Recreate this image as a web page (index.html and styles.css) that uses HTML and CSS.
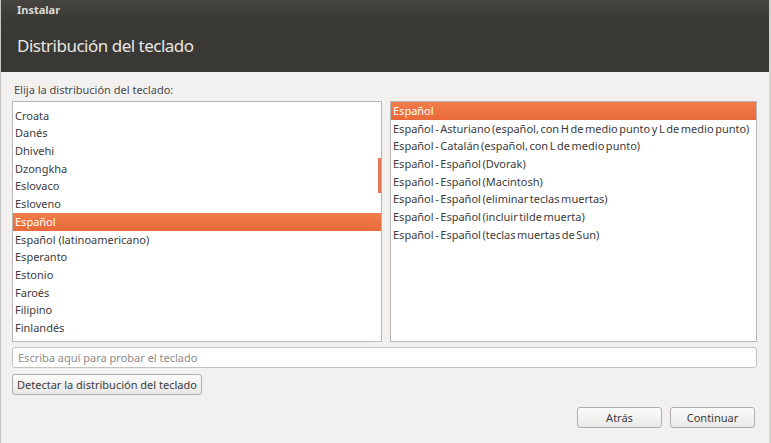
FILE: index.html
```html
<!DOCTYPE html>
<html lang="es">
<head>
    <meta charset="UTF-8">
    <title>Instalar</title>
    <link rel="stylesheet" href="styles.css">
</head>
<body>
    <div class="window">
        <div class="header">
            <div class="app-name">Instalar</div>
            <h1 class="page-title">Distribución del teclado</h1>
        </div>
        <div class="content">
            <div class="label">Elija la distribución del teclado:</div>
            <div class="lists">
                <div class="list list-left">
                    <div class="rows shifted">
                        <div class="row">Coreano</div>
                        <div class="row">Croata</div>
                        <div class="row">Danés</div>
                        <div class="row">Dhivehi</div>
                        <div class="row">Dzongkha</div>
                        <div class="row">Eslovaco</div>
                        <div class="row">Esloveno</div>
                        <div class="row selected">Español</div>
                        <div class="row">Español (latinoamericano)</div>
                        <div class="row">Esperanto</div>
                        <div class="row">Estonio</div>
                        <div class="row">Faroés</div>
                        <div class="row">Filipino</div>
                        <div class="row">Finlandés</div>
                        <div class="row">Francés</div>
                    </div>
                    <div class="scroll-thumb"></div>
                </div>
                <div class="list list-right">
                    <div class="rows">
                        <div class="row selected">Español</div>
                        <div class="row">Español - Asturiano (español, con H de medio punto y L de medio punto)</div>
                        <div class="row">Español - Catalán (español, con L de medio punto)</div>
                        <div class="row">Español - Español (Dvorak)</div>
                        <div class="row">Español - Español (Macintosh)</div>
                        <div class="row">Español - Español (eliminar teclas muertas)</div>
                        <div class="row">Español - Español (incluir tilde muerta)</div>
                        <div class="row">Español - Español (teclas muertas de Sun)</div>
                    </div>
                </div>
            </div>
            <input class="test-entry" type="text" placeholder="Escriba aquí para probar el teclado">
            <div class="detect-row">
                <button class="btn" type="button">Detectar la distribución del teclado</button>
            </div>
            <div class="nav-buttons">
                <button class="btn btn-nav" type="button">Atrás</button>
                <button class="btn btn-nav" type="button">Continuar</button>
            </div>
        </div>
    </div>
</body>
</html>
```

FILE: styles.css
```css
*{
    box-sizing: border-box;
}
body{
    margin: 0;
    width: 771px;
    height: 443px;
    overflow: hidden;
    background: #f2f1f0;
    font-family: "Noto Sans", "DejaVu Sans", sans-serif;
    font-size: 11px;
    color: #3c3c3c;
}
.window{
    height: 443px;
    display: flex;
    flex-direction: column;
    border-left: 1px solid #c9c7c4;
    border-right: 2px solid #d6d4d1;
}
.header{
    height: 72px;
    background: linear-gradient(#46443f, #3b3935 30%, #3a3834);
    padding: 3px 0 0 16px;
}
.app-name{
    font-weight: bold;
    font-size: 11px;
    color: #dcdad5;
    line-height: 14px;
}
.page-title{
    margin: 17px 0 0 0;
    font-weight: normal;
    font-size: 17px;
    letter-spacing: -0.5px;
    line-height: 24px;
    color: #e8e7e3;
}
.content{
    flex: 1;
    padding: 11px 12px 0 11px;
    display: flex;
    flex-direction: column;
}
.label{
    line-height: 14px;
    padding-left: 2px;
    color: #4a4a4a;
    margin-bottom: 4px;
}
.lists{
    display: flex;
    gap: 8px;
    height: 241px;
}
.list{
    position: relative;
    background: #ffffff;
    border: 1px solid #b9b7b4;
    overflow: hidden;
}
.list-left{
    width: 370px;
}
.list-right{
    flex: 1;
    word-spacing: -1.3px;
}
.rows.shifted{
    margin-top: -13px;
}
.row{
    height: 17.7px;
    line-height: 17.7px;
    padding-left: 2px;
    white-space: nowrap;
}
.row.selected{
    background: linear-gradient(#f27d4a, #e8693a);
    color: #ffffff;
}
.scroll-thumb{
    position: absolute;
    right: 0;
    top: 56px;
    width: 3px;
    height: 35px;
    background: #e27b55;
}
.test-entry{
    margin-top: 5px;
    height: 21px;
    width: 100%;
    border: 1px solid #c4c2bf;
    border-radius: 3px;
    background: #ffffff;
    font-family: inherit;
    font-size: 11px;
    padding: 0 5px;
    outline: none;
}
.test-entry::placeholder{
    color: #8c8c8c;
}
.detect-row{
    margin-top: 6px;
}
.btn{
    height: 21px;
    border: 1px solid #b0aeab;
    border-radius: 3px;
    background: linear-gradient(#fbfbfa, #e9e8e6);
    font-family: inherit;
    font-size: 11px;
    color: #3c3c3c;
    padding: 0 4px;
}
.nav-buttons{
    margin-top: 12px;
    display: flex;
    justify-content: flex-end;
    gap: 8px;
    padding-right: 2px;
}
.btn-nav{
    width: 85px;
}
```
